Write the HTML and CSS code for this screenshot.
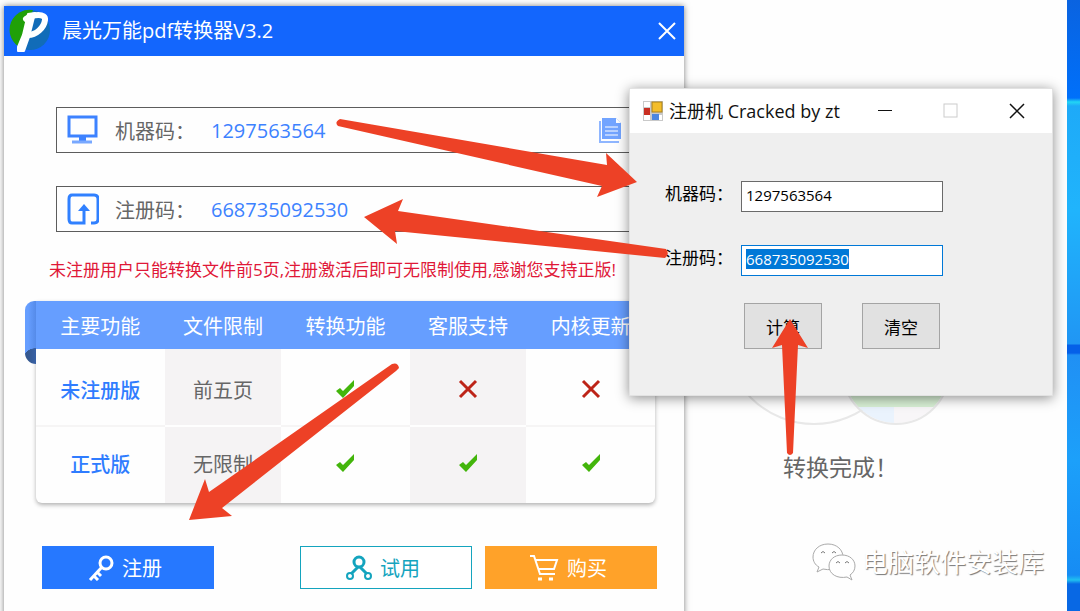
FILE: index.html
```html
<!DOCTYPE html>
<html lang="zh-CN">
<head>
    <meta charset="UTF-8">
    <meta name="viewport" content="width=device-width, initial-scale=1.0">
    <title>晨光万能pdf转换器V3.2</title>
    <link rel="stylesheet" href="styles.css">
</head>
<body>
    <div class="desktop">
        <!-- 背景页面 -->
        <main class="page">
            <div class="result">
                <svg class="result-art" width="230" height="200" viewBox="0 0 230 200">
                    <circle cx="89" cy="90" r="89" fill="#fefefe" stroke="#e8e8e8" stroke-width="2"/>
                    <clipPath id="disc"><circle cx="171" cy="126" r="52"/></clipPath>
                    <g clip-path="url(#disc)">
                        <rect x="110" y="70" width="120" height="92" fill="#d8f0d5"/>
                        <rect x="110" y="162" width="59" height="30" fill="#eaf3fd"/>
                        <rect x="169" y="162" width="60" height="30" fill="#f8f6f8"/>
                    </g>
                    <circle cx="171" cy="126" r="53" fill="none" stroke="#e8e8e8" stroke-width="2"/>
                </svg>
                <p class="result-text">转换完成！</p>
            </div>
        </main>

        <!-- 转换器窗口 -->
        <section class="converter">
            <header class="converter-title">
                <svg class="logo" width="42" height="44" viewBox="0 0 42 44">
                    <circle cx="21" cy="21" r="20" fill="#116cb8"/>
                    <path d="M24 1A20 20 0 0 0 9 37L24 1Z" fill="#20a008"/>
                    <path d="M19 5L26 4L20 28L15 42L9 42L9 38L14 26Z" fill="#fff" stroke="#fff" stroke-width="2" stroke-linejoin="round"/>
                    <path d="M17 10C24 5 37 4 36 11C35 19 27 26 19 26" fill="none" stroke="#fff" stroke-width="6" stroke-linecap="round"/>
                </svg>
                <h1>晨光万能pdf转换器V3.2</h1>
                <button class="close" aria-label="关闭">
                    <svg width="20" height="20" viewBox="0 0 20 20"><path d="M2 2L18 18M18 2L2 18" stroke="#fff" stroke-width="2"/></svg>
                </button>
            </header>

            <div class="fields">
                <div class="field">
                    <svg width="32" height="32" viewBox="0 0 32 32">
                        <rect x="2" y="3" width="27" height="19" fill="none" stroke="#3d82ff" stroke-width="3"/>
                        <path d="M12 23H19V27H12Z" fill="#3d82ff"/>
                        <path d="M5 28H25" stroke="#78a8ff" stroke-width="3"/>
                    </svg>
                    <label for="machineCode">机器码：</label>
                    <input type="text" id="machineCode" value="1297563564" readonly>
                    <button class="copy" aria-label="复制">
                        <svg width="22" height="26" viewBox="0 0 22 26">
                            <path d="M1 4V25H20" fill="none" stroke="#8fb6ff" stroke-width="2"/>
                            <path d="M3 1H17L22 6V22H3Z" fill="#72a4ff"/>
                            <path d="M17 1V6H22" fill="#fff"/>
                            <path d="M6 10H19M6 14H19M6 18H19" stroke="#fff"/>
                        </svg>
                    </button>
                </div>
                <div class="field">
                    <svg width="32" height="32" viewBox="0 0 32 32">
                        <path d="M24 30H27Q31 30 31 26V6Q31 2 27 2H5Q2 2 2 6V26Q2 30 5 30H17V16" fill="none" stroke="#3080ff" stroke-width="3"/>
                        <path d="M11 18L17 11L23 18Z" fill="#3080ff"/>
                    </svg>
                    <label for="regCode">注册码：</label>
                    <input type="text" id="regCode" value="668735092530">
                </div>
            </div>

            <p class="notice">未注册用户只能转换文件前5页,注册激活后即可无限制使用,感谢您支持正版!</p>

            <div class="compare">
                <table>
                    <colgroup>
                        <col class="wide">
                        <col class="narrow">
                        <col class="wide">
                        <col class="narrow">
                        <col class="wide">
                    </colgroup>
                    <thead>
                        <tr>
                            <th>主要功能</th>
                            <th>文件限制</th>
                            <th>转换功能</th>
                            <th>客服支持</th>
                            <th>内核更新</th>
                        </tr>
                    </thead>
                    <tbody>
                        <tr>
                            <th scope="row">未注册版</th>
                            <td>前五页</td>
                            <td><svg class="mark" viewBox="0 0 20 20"><path d="M1 12L5 9L8 12L19 1V7L8 19Z" fill="#43b50b"/></svg></td>
                            <td><svg class="mark" viewBox="0 0 20 20"><path d="M2 2L18 18M18 2L2 18" stroke="#bd2418" stroke-width="3"/></svg></td>
                            <td><svg class="mark" viewBox="0 0 20 20"><path d="M2 2L18 18M18 2L2 18" stroke="#bd2418" stroke-width="3"/></svg></td>
                        </tr>
                        <tr>
                            <th scope="row">正式版</th>
                            <td>无限制</td>
                            <td><svg class="mark" viewBox="0 0 20 20"><path d="M1 12L5 9L8 12L19 1V7L8 19Z" fill="#43b50b"/></svg></td>
                            <td><svg class="mark" viewBox="0 0 20 20"><path d="M1 12L5 9L8 12L19 1V7L8 19Z" fill="#43b50b"/></svg></td>
                            <td><svg class="mark" viewBox="0 0 20 20"><path d="M1 12L5 9L8 12L19 1V7L8 19Z" fill="#43b50b"/></svg></td>
                        </tr>
                    </tbody>
                </table>
            </div>

            <div class="actions">
                <button class="action register">
                    <svg width="26" height="26" viewBox="0 0 26 26" fill="none" stroke="#fff">
                        <circle cx="18" cy="8" r="6" stroke-width="3"/>
                        <path d="M14 12L2 25M5 20L10 25M9 17L13 21" stroke-width="3"/>
                    </svg>
                    注册
                </button>
                <button class="action trial">
                    <svg width="26" height="26" viewBox="0 0 26 26" fill="none" stroke="#14a4be" stroke-width="2">
                        <circle cx="13" cy="7" r="5" stroke-width="3"/>
                        <path d="M12 12L5 19M14 12L21 19" stroke-width="3"/>
                        <circle cx="4" cy="21" r="3"/>
                        <circle cx="22" cy="21" r="3"/>
                    </svg>
                    试用
                </button>
                <button class="action buy">
                    <svg width="30" height="28" viewBox="0 0 30 28" fill="none" stroke="#fff" stroke-width="2">
                        <path d="M1 2H5L11 20H26M6 6H28L25 15H9"/>
                        <path d="M9 25H13M20 25H24" stroke-width="3"/>
                    </svg>
                    购买
                </button>
            </div>
        </section>

        <!-- 注册机窗口 -->
        <section class="keygen">
            <header class="keygen-title">
                <svg width="20" height="20" viewBox="0 0 20 20">
                    <rect width="20" height="20" fill="#c9c9c9"/>
                    <path d="M1 1H7V6H1ZM1 14H7V19H1ZM16 14H19V19H16Z" fill="#fff"/>
                    <rect x="9" y="1" width="10" height="10" fill="#f3bd2a" stroke="#a8801a"/>
                    <rect x="1" y="7" width="6" height="7" fill="#c92e22"/>
                    <rect x="9" y="13" width="7" height="6" fill="#4b86e0"/>
                </svg>
                <h2>注册机 Cracked by zt</h2>
                <div class="window-buttons">
                    <button aria-label="最小化"><svg width="16" height="16" viewBox="0 0 16 16"><path d="M1 7.5H15" stroke="#111"/></svg></button>
                    <button aria-label="最大化" disabled><svg width="16" height="16" viewBox="0 0 16 16"><rect x="1" y="1" width="13" height="13" fill="none" stroke="#ccc"/></svg></button>
                    <button aria-label="关闭"><svg width="16" height="16" viewBox="0 0 16 16"><path d="M1 1L15 15M15 1L1 15" stroke="#111" stroke-width="1.5"/></svg></button>
                </div>
            </header>
            <div class="keygen-body">
                <div class="keygen-row">
                    <label for="genMachine">机器码：</label>
                    <input type="text" id="genMachine" value="1297563564">
                </div>
                <div class="keygen-row">
                    <label for="genCode">注册码：</label>
                    <input type="text" id="genCode" value="668735092530">
                </div>
                <div class="keygen-buttons">
                    <button>计算</button>
                    <button>清空</button>
                </div>
            </div>
        </section>

        <!-- 操作步骤箭头 -->
        <svg class="arrows" width="1080" height="611" viewBox="0 0 1080 611" fill="#ed4126">
            <path d="M340 119L607 165L606 153L637 182L597 197L602 186L338 126Q334 122 340 119Z"/>
            <path d="M364 217L403 199L398 211L666 249Q670 254 665 258L395 231L397 244Z"/>
            <path d="M189 520L205 479L209 492L392 364Q398 362 399 368L396 371L222 508L232 516Z"/>
            <path d="M790 319L808 348L798 345L793 453Q790 457 787 453L782 345L772 348Z"/>
        </svg>

        <div class="watermark">
            <svg width="44" height="38" viewBox="0 0 44 38">
                <g fill="#fff" stroke="#aaa">
                    <path d="M16 1C7 1 1 7 1 14C1 18 3 22 7 24L5 29L11 26C24 29 31 21 31 14C31 7 25 1 16 1Z"/>
                    <path d="M30 12C22 12 17 17 17 23C17 31 25 36 35 34L40 37L38 32C41 30 43 27 43 23C43 17 38 12 30 12Z"/>
                </g>
                <path d="M9 10Q11 7 13 10M20 10Q22 7 24 10M24 20Q26 17 28 20M33 20Q35 17 37 20" fill="none" stroke="#777"/>
            </svg>
            <span>电脑软件安装库</span>
        </div>
    </div>

    <script>
        // 选中生成的注册码
        document.getElementById('genCode').select();
    </script>
</body>
</html>
```
FILE: styles.css
```css
* {
    box-sizing: border-box;
}

body {
    font-family: "Open Sans", "Noto Sans CJK SC", sans-serif;
    margin: 0;
}

h1, h2, p {
    margin: 0;
    font-weight: 400;
}

button, input {
    font-family: inherit;
    margin: 0;
    padding: 0;
}

button {
    border: none;
    background: none;
    cursor: pointer;
}

svg {
    flex-shrink: 0;
}

/* 桌面 */
.desktop {
    position: relative;
    min-height: 100vh;
    overflow: hidden;
    padding-right: 13px;
    background: linear-gradient(#0a63e0 0, #0070fa 98px, #22d6f4 102px, #1eaaf8 106px, #20b4fc 210px, #2096f4 344px, #0560e8 345px, #0560e8 353px, #2090f4 355px, #1ca0fa 460px, #168cf4 575px, #20c0f0 580px, #0868e4 584px);
}

.page {
    min-height: 100vh;
    background-color: #fefefe;
    padding: 245px 0 0 725px;
}

.result-art {
    display: block;
}

.result-text {
    padding-left: 58px;
    font-size: 23px;
    line-height: 44px;
    color: #666;
}

/* 转换器 */
.converter {
    position: absolute;
    left: 4px;
    top: 6px;
    width: 680px;
    min-height: 620px;
    background-color: #fefefe;
    box-shadow: 0 0 6px rgba(0, 0, 0, 0.5);
}

.converter-title {
    display: flex;
    align-items: center;
    height: 50px;
    padding: 0 7px 0 5px;
    background-color: #1366fd;
    color: #fff;
}

.converter-title h1 {
    flex: 1;
    padding-left: 11px;
    font-size: 20px;
    line-height: 30px;
}

.close {
    display: flex;
}

.fields {
    display: flex;
    flex-direction: column;
    gap: 33px;
    padding: 51px 44px 0 52px;
}

.field {
    display: flex;
    align-items: center;
    height: 46px;
    padding: 0 18px 0 10px;
    border: 1px solid #5c5c5c;
    font-size: 20px;
}

.field label {
    width: 96px;
    margin-left: 16px;
    color: #666;
    white-space: nowrap;
}

.field input {
    flex: 1;
    min-width: 0;
    border: none;
    outline: none;
    background: none;
    font-size: 20px;
    color: #3d82ff;
}

.copy {
    display: flex;
}

.notice {
    padding: 25px 0 18px 45px;
    font-size: 17px;
    line-height: 26px;
    color: #e01838;
    white-space: nowrap;
}

/* 功能对比表 */
.compare {
    position: relative;
    margin: 0 29px 0 32px;
    border-radius: 0 0 6px 6px;
    box-shadow: 0 2px 4px rgba(0, 0, 0, 0.3);
}

/* 表头左侧的折边 */
.compare::before {
    content: "";
    position: absolute;
    left: -11px;
    top: 0;
    width: 11px;
    height: 63px;
    border-radius: 10px 0 0 12px;
    background: linear-gradient(90deg, transparent 3px, rgba(60, 110, 200, 0.4)), radial-gradient(12px 9px at 11px 56px, #35588f 95%, transparent), linear-gradient(#669eff, #669eff);
}

.compare table {
    width: 100%;
    border-collapse: collapse;
    table-layout: fixed;
    font-size: 20px;
    color: #666;
}

.wide {
    width: 21%;
}

.narrow {
    width: 19%;
}

.compare th, .compare td {
    padding: 0;
    font-weight: 400;
    text-align: center;
}

.compare thead th {
    height: 48px;
    background-color: #669eff;
    color: #fff;
}

.compare tbody th, .compare tbody td {
    height: 77px;
    padding-bottom: 4px;
}

.compare tbody th {
    font-weight: 500;
    color: #2f7cff;
}

.compare td:nth-child(even) {
    background-color: #f5f3f4;
}

.compare tbody tr:first-child > * {
    padding-top: 4px;
    padding-bottom: 0;
    border-bottom: 2px solid #f6f5f5;
}

.compare tbody tr:first-child td:nth-child(even) {
    border-bottom-color: #fefefe;
}

.mark {
    display: block;
    width: 20px;
    height: 20px;
    margin: 0 auto;
}

.actions {
    display: flex;
    gap: 13px;
    padding: 43px 27px 20px 38px;
}

.action {
    display: flex;
    align-items: center;
    justify-content: center;
    gap: 8px;
    width: 172px;
    height: 43px;
    padding-right: 6px;
    font-size: 20px;
    color: #fff;
}

.register {
    margin-right: auto;
    background-color: #2678ff;
}

.trial {
    border: 1px solid #14a4be;
    background-color: #fff;
    color: #14a4be;
}

.buy {
    background-color: #ffa229;
}

/* 注册机 */
.keygen {
    position: absolute;
    left: 629px;
    top: 88px;
    width: 424px;
    background-color: #efefef;
    border: 1px solid #e2e2e2;
    box-shadow: 0 2px 12px rgba(0, 0, 0, 0.45);
}

.keygen-title {
    display: flex;
    align-items: center;
    height: 44px;
    padding-left: 13px;
    background-color: #fff;
}

.keygen-title h2 {
    padding-left: 6px;
    font-size: 18px;
    line-height: 24px;
    color: #111;
}

.window-buttons {
    display: flex;
    margin-left: auto;
    padding-right: 2px;
}

.window-buttons button {
    display: flex;
    justify-content: center;
    width: 66px;
}

.keygen-body {
    padding: 48px 36px 46px 35px;
    font-size: 17px;
}

.keygen-row {
    display: flex;
    align-items: flex-start;
    margin-bottom: 33px;
}

.keygen-row label {
    width: 76px;
    line-height: 26px;
    white-space: nowrap;
}

.keygen-row input {
    width: 202px;
    height: 31px;
    padding: 0 4px 4px;
    border: 1px solid #6a6a6a;
    background-color: #fff;
    font-size: 15px;
    color: #000;
}

.keygen-row input:focus {
    border-color: #0078d7;
    outline: none;
}

.keygen-row input::selection {
    background-color: #0078d7;
    color: #fff;
}

.keygen-buttons {
    display: flex;
    gap: 40px;
    margin-top: -6px;
    padding-left: 79px;
}

.keygen-buttons button {
    width: 78px;
    height: 46px;
    border: 1px solid #a4a4a4;
    background-color: #e1e1e1;
    font-size: 17px;
    color: #000;
}

.arrows {
    position: absolute;
    left: 0;
    top: 0;
    pointer-events: none;
}

/* 水印 */
.watermark {
    position: absolute;
    right: 36px;
    bottom: 29px;
    display: flex;
    align-items: center;
    gap: 6px;
    font-size: 26px;
    line-height: 40px;
    color: #fff;
    text-shadow: 1px 1px 1px #777;
}
```
